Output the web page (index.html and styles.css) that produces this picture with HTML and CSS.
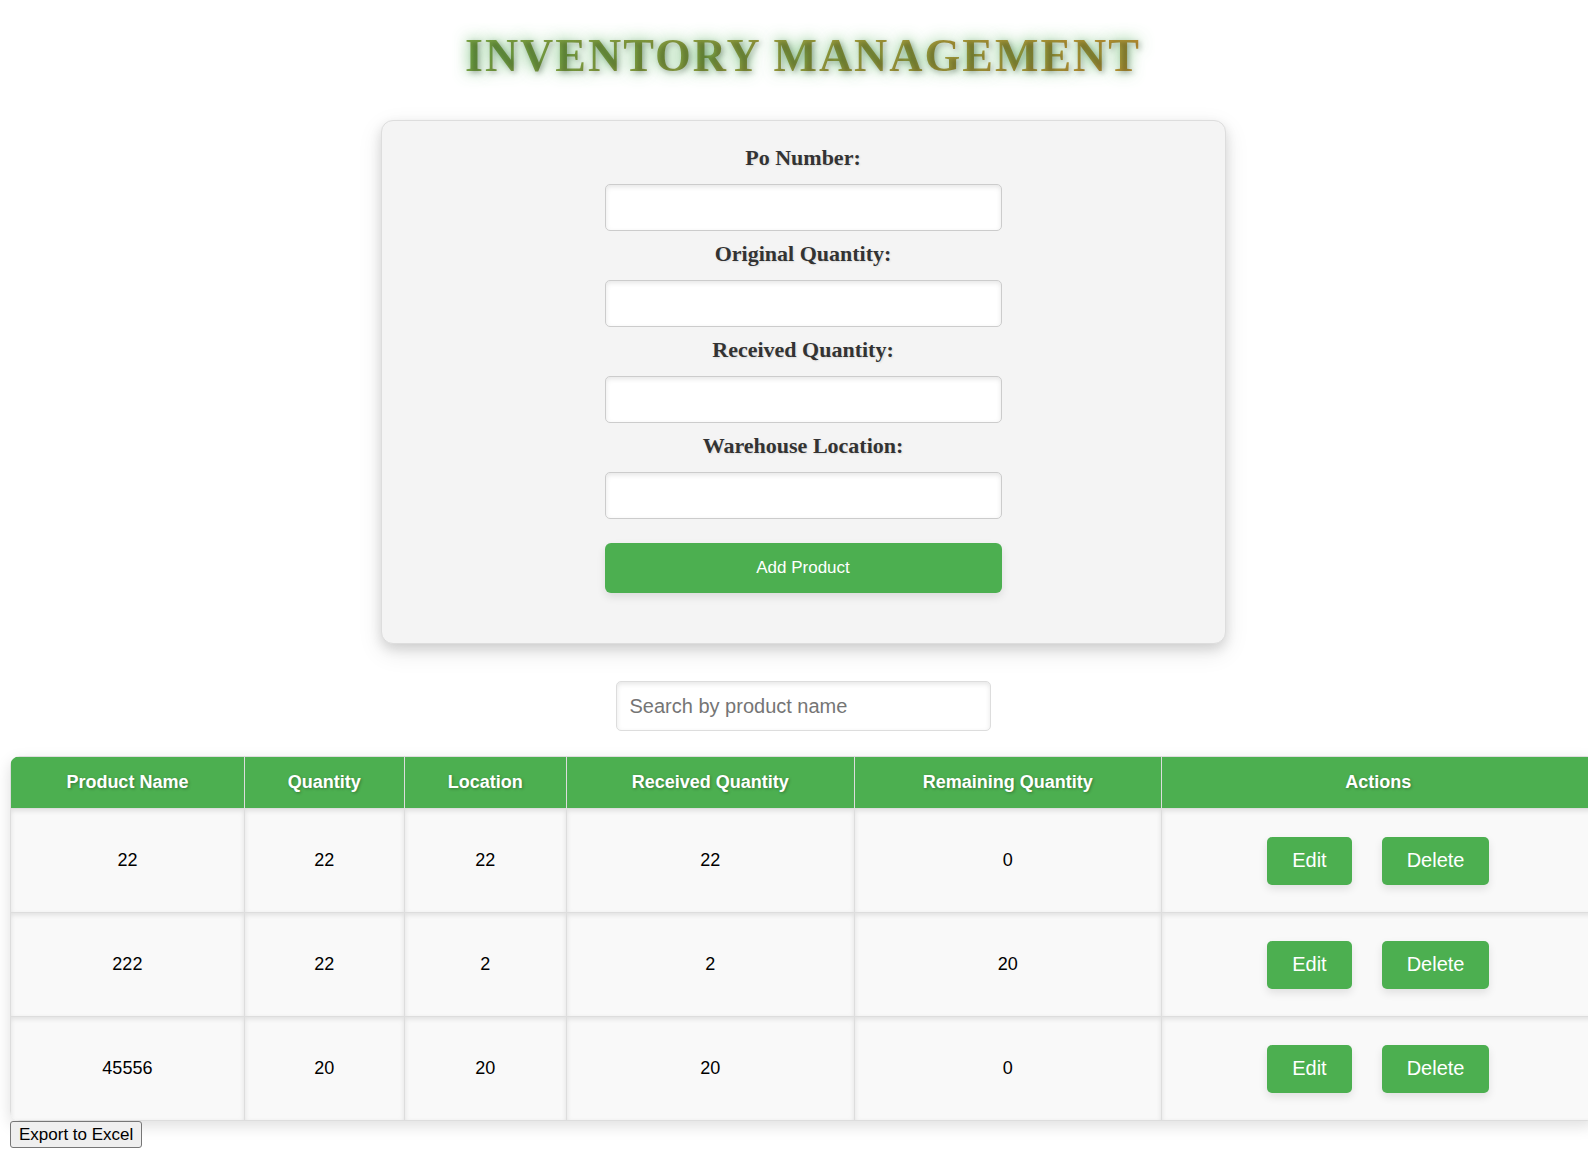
FILE: index.html
```html
<!DOCTYPE html>
<html lang="en">
<head>
<meta charset="utf-8">
<meta name="viewport" content="width=device-width, initial-scale=1">
<title>Inventory Management</title>
<link rel="stylesheet" href="styles.css">
</head>
<body>
<main class="page">
  <h1 class="title">INVENTORY MANAGEMENT</h1>

  <form class="product-form">
    <div class="fields">
      <div class="field">
        <label for="po-number">Po Number:</label>
        <input type="text" id="po-number">
      </div>
      <div class="field">
        <label for="original-quantity">Original Quantity:</label>
        <input type="text" id="original-quantity">
      </div>
      <div class="field">
        <label for="received-quantity">Received Quantity:</label>
        <input type="text" id="received-quantity">
      </div>
      <div class="field">
        <label for="location">Warehouse Location:</label>
        <input type="text" id="location">
      </div>
    </div>
    <button type="button" class="add-button">Add Product</button>
  </form>

  <input type="search" class="search" placeholder="Search by product name" aria-label="Search by product name">

  <table class="products">
    <colgroup>
      <col class="col-name"><col class="col-quantity"><col class="col-location">
      <col class="col-received"><col class="col-remaining"><col>
    </colgroup>
    <thead>
      <tr><th>Product Name</th><th>Quantity</th><th>Location</th><th>Received Quantity</th><th>Remaining Quantity</th><th>Actions</th></tr>
    </thead>
    <tbody>
      <tr>
        <td>22</td><td>22</td><td>22</td><td>22</td><td>0</td>
        <td><div class="actions"><button type="button">Edit</button><button type="button">Delete</button></div></td>
      </tr>
      <tr>
        <td>222</td><td>22</td><td>2</td><td>2</td><td>20</td>
        <td><div class="actions"><button type="button">Edit</button><button type="button">Delete</button></div></td>
      </tr>
      <tr>
        <td>45556</td><td>20</td><td>20</td><td>20</td><td>0</td>
        <td><div class="actions"><button type="button">Edit</button><button type="button">Delete</button></div></td>
      </tr>
    </tbody>
  </table>
  <button type="button" class="export">Export to Excel</button>
</main>
</body>
</html>
```
FILE: styles.css
```css
* { box-sizing: border-box; }

html { overflow-x: hidden; }

body {
  margin: 0;
  background: #fff;
  color: #000;
  font-family: "Liberation Serif", "Times New Roman", serif;
}

/* The table runs slightly past the right edge of the window. */
.page {
  display: flex;
  flex-direction: column;
  align-items: center;
  margin: 0 -8px 0 10px;
  padding-bottom: 10px;
}

button,
input,
.products {
  font-family: "Liberation Sans", Arial, sans-serif;
}

.title {
  width: 100%;
  margin: 28px 0 36px;
  font-size: 46px;
  line-height: 56px;
  letter-spacing: 2px;
  text-align: center;
  color: transparent;
  background: linear-gradient(45deg, #4caf50, #ff7f22);
  -webkit-background-clip: text;
  background-clip: text;
  text-shadow: 2px 2px 5px rgba(0, 0, 0, 0.24), 0 0 15px rgba(76, 175, 80, 0.8);
}

.product-form {
  display: flex;
  flex-direction: column;
  align-items: center;
  gap: 24px;
  width: 845px;
  max-width: 100%;
  padding: 24px 24px 50px;
  border: 1px solid #ddd;
  border-radius: 12px;
  background: #f4f4f4;
  box-shadow: 0 5px 12px rgba(0, 0, 0, 0.12), 0 8px 25px rgba(0, 0, 0, 0.1);
}

.fields {
  display: flex;
  flex-direction: column;
  gap: 10px;
  width: 397px;
}

.field {
  display: flex;
  flex-direction: column;
  gap: 13px;
}

.field label {
  color: #333;
  font-size: 22px;
  font-weight: bold;
  line-height: 26px;
  text-align: center;
  text-shadow: 1px 1px 2px rgba(0, 0, 0, 0.1);
}

.field input {
  width: 100%;
  height: 47px;
  padding: 12px;
  border: 1px solid #ccc;
  border-radius: 5px;
  background: #fff;
  font-size: 17px;
  box-shadow: inset 0 2px 5px rgba(0, 0, 0, 0.1);
}

.add-button,
.actions button {
  border: none;
  border-radius: 6px;
  background: #4caf50;
  color: #fff;
  box-shadow: 0 4px 8px rgba(0, 0, 0, 0.1);
}

.add-button {
  width: 397px;
  height: 50px;
  font-size: 17px;
}

.search {
  appearance: none;
  width: 375px;
  height: 50px;
  margin: 37px 0 25px;
  padding: 13px;
  border: 1px solid #ddd;
  border-radius: 5px;
  font-size: 20px;
  box-shadow: inset 0 2px 5px rgba(0, 0, 0, 0.1);
}

.search::placeholder { color: #757575; }

.products {
  width: 100%;
  table-layout: fixed;
  border-collapse: collapse;
  border-radius: 10px;
  overflow: hidden;
  font-size: 18px;
  text-align: center;
  box-shadow: 0 5px 15px rgba(0, 0, 0, 0.13);
}

.col-name { width: 14.75%; }
.col-quantity { width: 10.1%; }
.col-location { width: 10.2%; }
.col-received { width: 18.2%; }
.col-remaining { width: 19.35%; }

.products th,
.products td {
  padding: 0;
  border: 1px solid #ddd;
}

.products th {
  height: 52px;
  background: #4caf50;
  color: #fff;
  text-shadow: 1px 1px 3px rgba(0, 0, 0, 0.3);
}

.products td {
  height: 104px;
  background: #f9f9f9;
  box-shadow: inset 0 2px 5px rgba(0, 0, 0, 0.1);
}

.actions {
  display: flex;
  justify-content: center;
  gap: 30px;
}

.actions button {
  height: 48px;
  padding: 0 25px;
  border-radius: 5px;
  font-size: 20px;
}

.export {
  align-self: flex-start;
  height: 27px;
  padding: 0 8px;
  border: 1px solid #767676;
  border-radius: 3px;
  background: #efefef;
  color: #000;
  font-size: 17px;
  z-index: 1;
}
```
